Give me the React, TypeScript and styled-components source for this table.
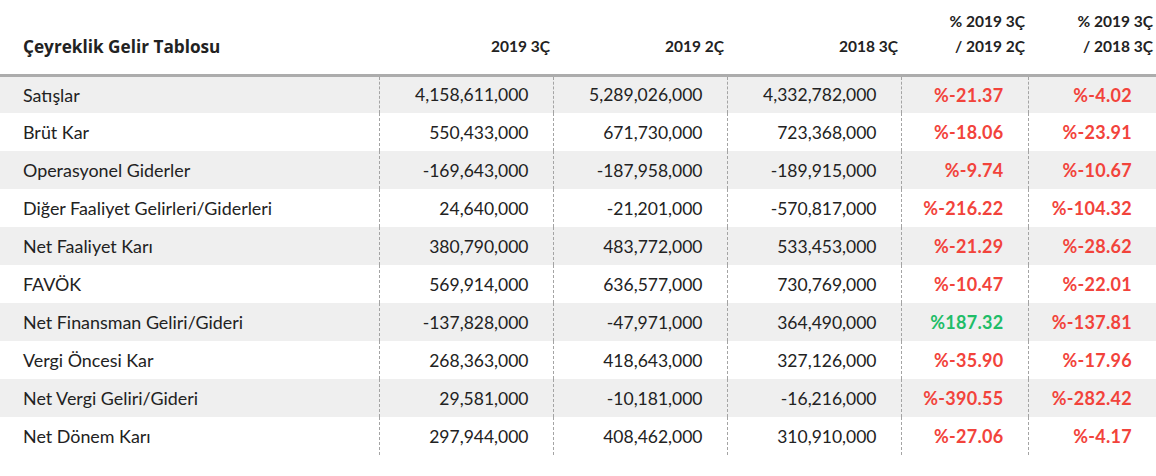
import React from "react";
import styled, { createGlobalStyle } from "styled-components";

const GlobalStyle = createGlobalStyle`
  html, body {
    margin: 0;
    padding: 0;
    background: #ffffff;
  }
  body {
    font-family: "Lato", "Liberation Sans", sans-serif;
    color: #222222;
  }
`;

type Row = {
  label: string;
  q3: string;
  q2: string;
  prev: string;
  qoq: string;
  yoy: string;
};

const rows: Row[] = [
  { label: "Satışlar", q3: "4,158,611,000", q2: "5,289,026,000", prev: "4,332,782,000", qoq: "%-21.37", yoy: "%-4.02" },
  { label: "Brüt Kar", q3: "550,433,000", q2: "671,730,000", prev: "723,368,000", qoq: "%-18.06", yoy: "%-23.91" },
  { label: "Operasyonel Giderler", q3: "-169,643,000", q2: "-187,958,000", prev: "-189,915,000", qoq: "%-9.74", yoy: "%-10.67" },
  { label: "Diğer Faaliyet Gelirleri/Giderleri", q3: "24,640,000", q2: "-21,201,000", prev: "-570,817,000", qoq: "%-216.22", yoy: "%-104.32" },
  { label: "Net Faaliyet Karı", q3: "380,790,000", q2: "483,772,000", prev: "533,453,000", qoq: "%-21.29", yoy: "%-28.62" },
  { label: "FAVÖK", q3: "569,914,000", q2: "636,577,000", prev: "730,769,000", qoq: "%-10.47", yoy: "%-22.01" },
  { label: "Net Finansman Geliri/Gideri", q3: "-137,828,000", q2: "-47,971,000", prev: "364,490,000", qoq: "%187.32", yoy: "%-137.81" },
  { label: "Vergi Öncesi Kar", q3: "268,363,000", q2: "418,643,000", prev: "327,126,000", qoq: "%-35.90", yoy: "%-17.96" },
  { label: "Net Vergi Geliri/Gideri", q3: "29,581,000", q2: "-10,181,000", prev: "-16,216,000", qoq: "%-390.55", yoy: "%-282.42" },
  { label: "Net Dönem Karı", q3: "297,944,000", q2: "408,462,000", prev: "310,910,000", qoq: "%-27.06", yoy: "%-4.17" },
];

const Table = styled.table`
  width: 1156px;
  border-collapse: collapse;
  table-layout: fixed;
`;

const HeadRow = styled.tr`
  height: 75px;
  border-bottom: 3px solid #acacac;
`;

const TitleCell = styled.th`
  text-align: left;
  vertical-align: bottom;
  padding: 0 0 15px 23px;
  font-family: "Open Sans", "Lato", sans-serif;
  font-size: 17.2px;
  font-weight: 700;
  line-height: 25px;
`;

const HeadCell = styled.th`
  text-align: right;
  vertical-align: bottom;
  padding: 0 3px 15px 0;
  font-family: "Lato", sans-serif;
  font-size: 15.5px;
  font-weight: 700;
  line-height: 25px;
  white-space: nowrap;
`;

const BodyRow = styled.tr<{ $striped: boolean }>`
  height: 38px;
  background: ${(p) => (p.$striped ? "#efefef" : "transparent")};
`;

const LabelCell = styled.td`
  padding: 0 0 0 23px;
  font-family: "Lato", sans-serif;
  font-size: 17.9px;
  white-space: nowrap;
`;

const NumCell = styled.td`
  text-align: right;
  padding: 0 24px 0 0;
  font-size: 17.5px;
  border-left: 1px dashed #a4a4a4;
  white-space: nowrap;
`;

const PctCell = styled(NumCell)<{ $up: boolean }>`
  font-size: 18px;
  font-weight: 700;
  letter-spacing: 0.3px;
  color: ${(p) => (p.$up ? "#1fbd68" : "#f2433b")};
`;

const isUp = (v: string) => !v.startsWith("%-");

export default function App() {
  return (
    <>
      <GlobalStyle />
      <Table>
        <colgroup>
          <col style={{ width: 379 }} />
          <col style={{ width: 174 }} />
          <col style={{ width: 174 }} />
          <col style={{ width: 174 }} />
          <col style={{ width: 127 }} />
          <col style={{ width: 128 }} />
        </colgroup>
        <thead>
          <HeadRow>
            <TitleCell>Çeyreklik Gelir Tablosu</TitleCell>
            <HeadCell>2019 3Ç</HeadCell>
            <HeadCell>2019 2Ç</HeadCell>
            <HeadCell>2018 3Ç</HeadCell>
            <HeadCell>
              % 2019 3Ç
              <br />/ 2019 2Ç
            </HeadCell>
            <HeadCell>
              % 2019 3Ç
              <br />/ 2018 3Ç
            </HeadCell>
          </HeadRow>
        </thead>
        <tbody>
          {rows.map((r, i) => (
            <BodyRow key={r.label} $striped={i % 2 === 0}>
              <LabelCell>{r.label}</LabelCell>
              <NumCell>{r.q3}</NumCell>
              <NumCell>{r.q2}</NumCell>
              <NumCell>{r.prev}</NumCell>
              <PctCell $up={isUp(r.qoq)}>{r.qoq}</PctCell>
              <PctCell $up={isUp(r.yoy)}>{r.yoy}</PctCell>
            </BodyRow>
          ))}
        </tbody>
      </Table>
    </>
  );
}
